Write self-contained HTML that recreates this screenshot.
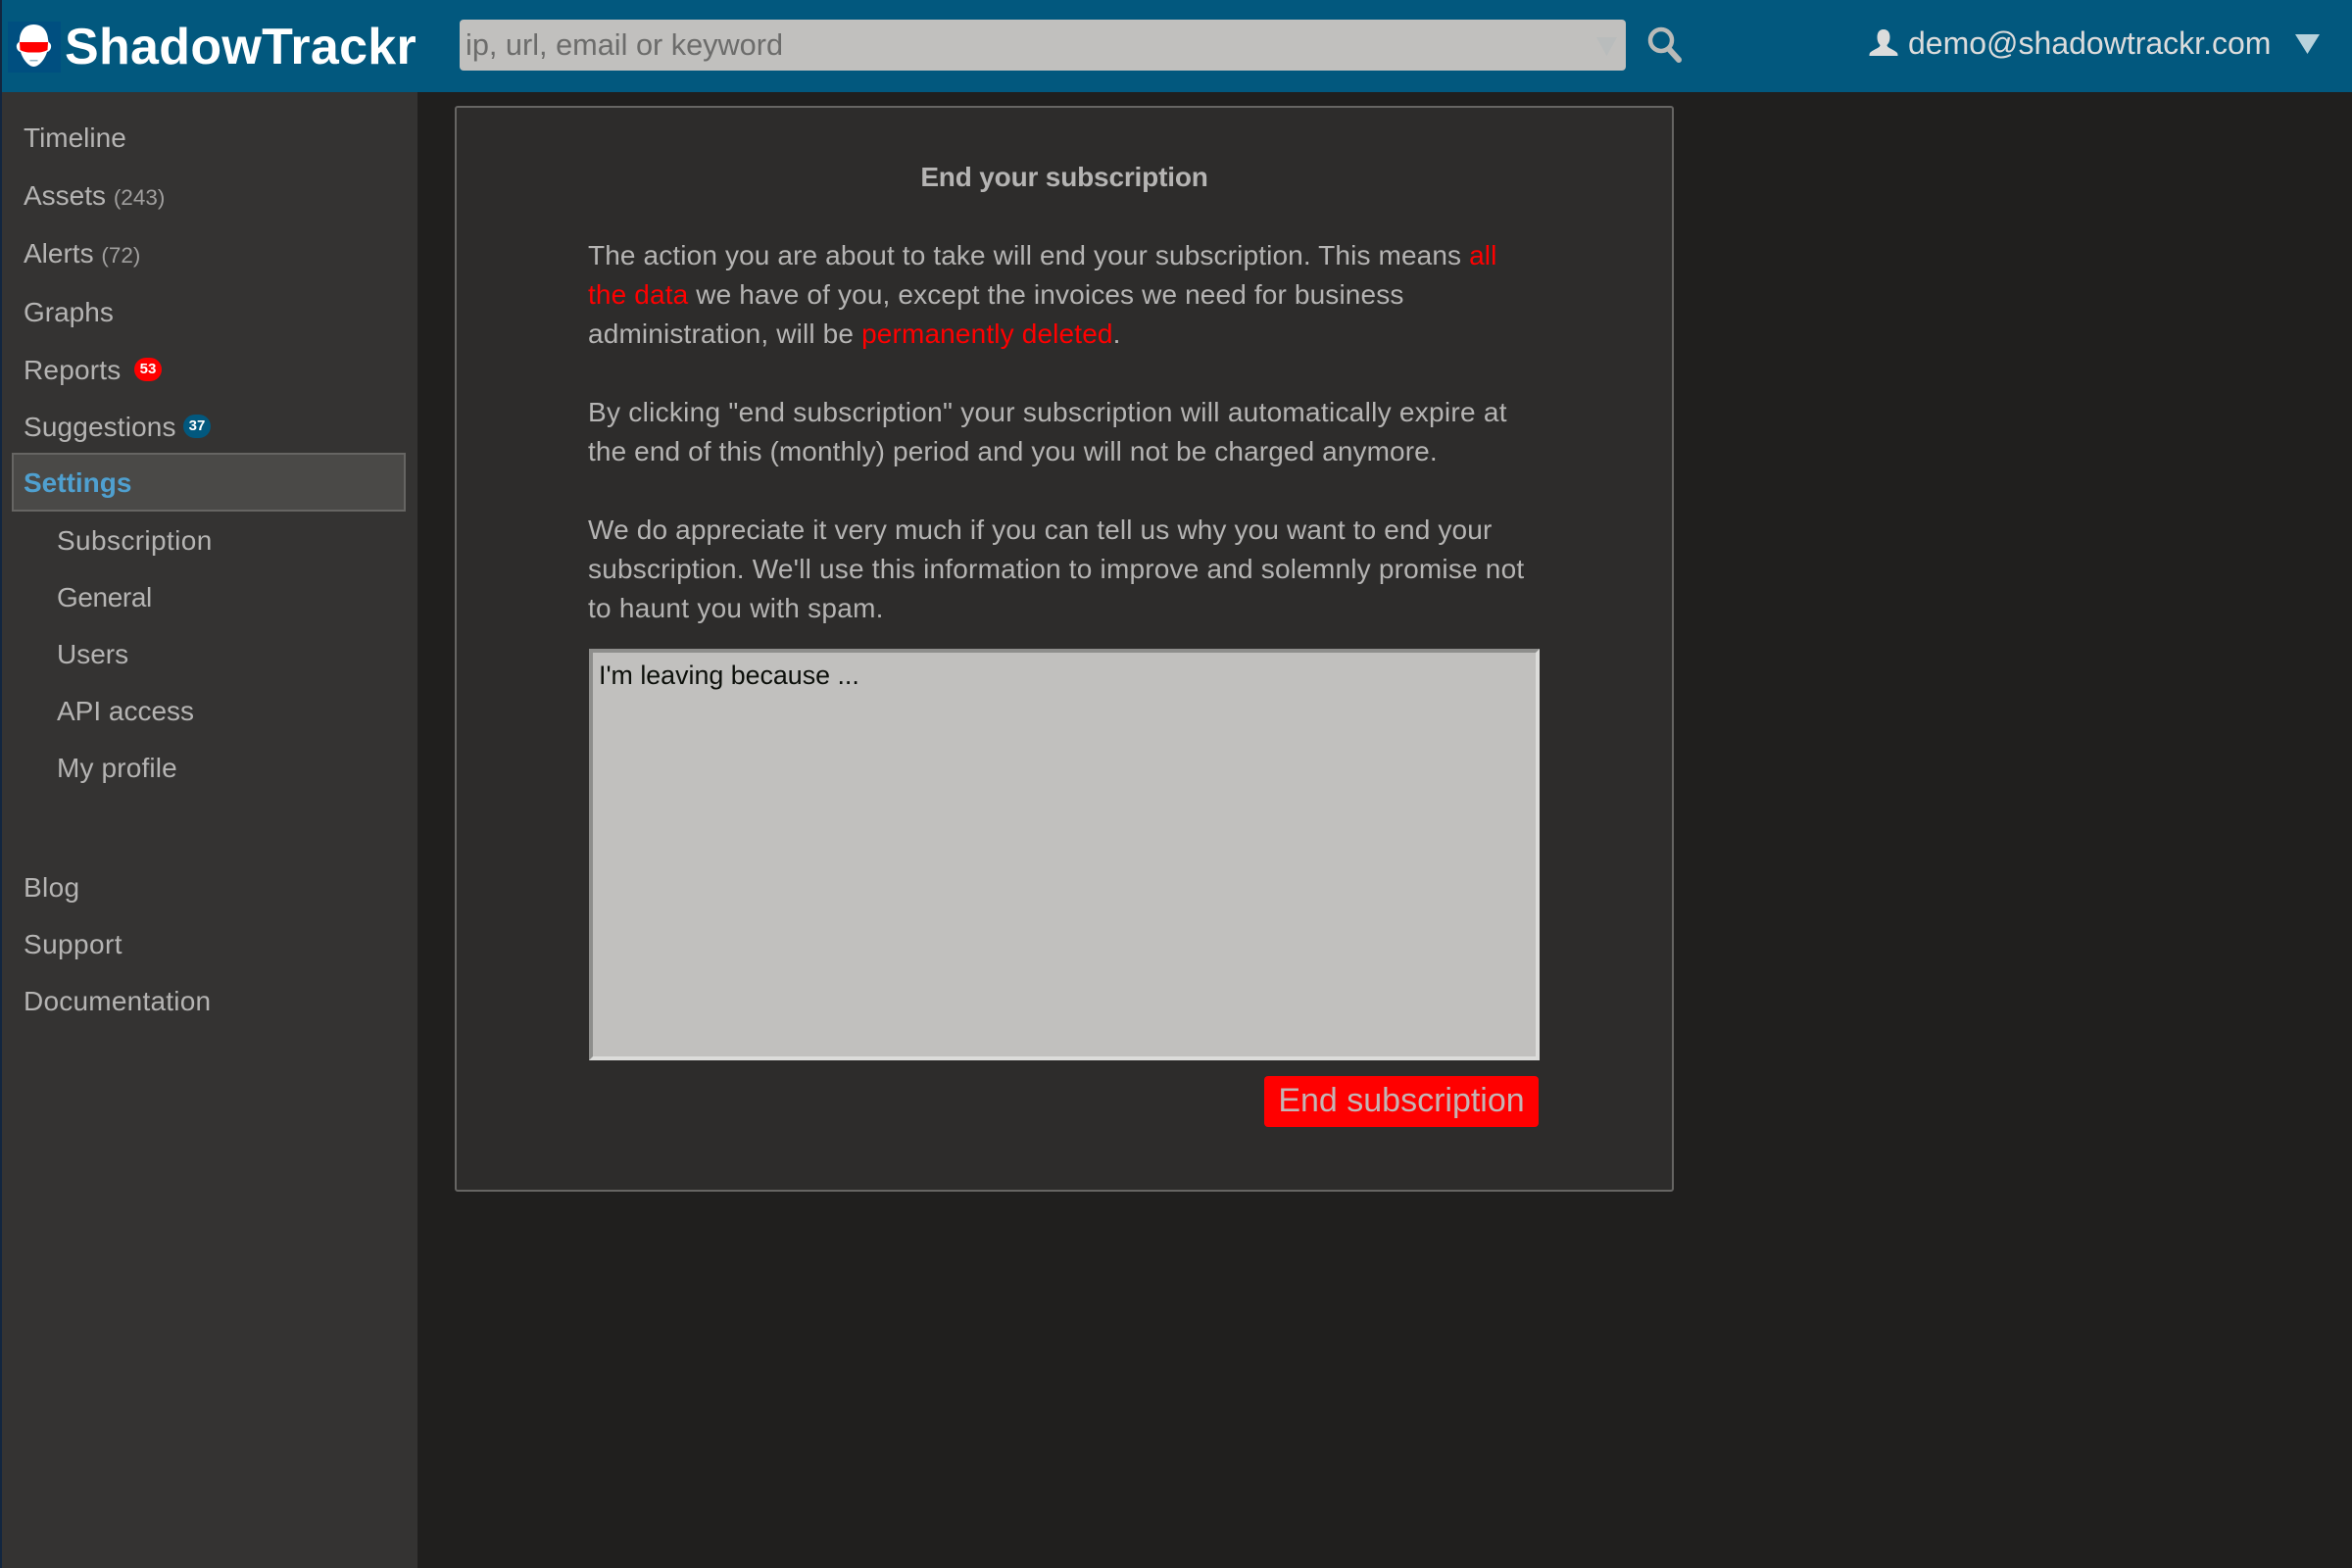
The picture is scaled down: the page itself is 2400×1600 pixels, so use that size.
<!DOCTYPE html>
<html lang="en">
<head>
<meta charset="utf-8">
<title>ShadowTrackr</title>
<style>
html,body{margin:0;padding:0;width:2400px;height:1600px;overflow:hidden;background:#201f1e;font-family:"Liberation Sans",Arial,sans-serif;color:#b5b4b3}
*{box-sizing:border-box}
.a{position:absolute;white-space:nowrap}
#edge{left:0;top:0;width:2px;height:1600px;background:#12263f}
#header{left:2px;top:0;width:2398px;height:94px;background:#02587e}
#side{left:2px;top:94px;width:424px;height:1506px;background:#343332}
.n{font-size:28px;line-height:40px;left:24px;color:#b5b4b3}
.s{left:58px}
.n small{font-size:22.5px;color:#a09f9e}
.badge{height:24px;width:28px;border-radius:12px;color:#fff;font-size:15px;font-weight:bold;line-height:24px;text-align:center}
#active{left:12px;top:462px;width:402px;height:60px;background:#4a4947;border:2px solid #666563}
#panel{left:464px;top:108px;width:1244px;height:1108px;background:#2d2c2b;border:2px solid #666563;border-radius:3px}
.p{left:600px;font-size:28px;line-height:40px;color:#b5b4b3}
.r{color:#ff0000}
#ta{left:601px;top:662px;width:970px;height:420px;background:#c1c0be;border:4px solid;border-color:#8e8e8c #dcdcda #dcdcda #8e8e8c;color:#0c0f0a;font-size:26.8px;line-height:32px;padding:7px 6px}
#btn{left:1290px;top:1098px;width:280px;height:52px;background:#ff0000;border-radius:4px;color:#c4b4b4;font-size:34px;line-height:51px;text-align:center}
</style>
</head>
<body>
<div class="a" id="edge"></div>
<div class="a" id="header"></div>
<div class="a" id="side"></div>

<svg class="a" style="left:8px;top:22px" width="54" height="52" viewBox="0 0 54 52">
<rect width="54" height="52" fill="#004f80"/>
<path d="M26.500 3C17 3 12.500 10 12 18L11.500 21C9.500 22 8.500 24 9 26.500C9.500 29 11 30.500 13 31C15 38 21 46 26.500 46C32 46 38 38 40 31C42 30.500 43.500 29 44 26.500C44.500 24 43.500 22 41.500 21L41 18C40.500 10 36 3 26.500 3Z" fill="#fff"/>
<path d="M12 21L41 21L40.500 29C35 32 30 31.500 26.500 31.500C23 31.500 18 32 12.500 29Z" fill="#ff0000"/>
<rect x="22.500" y="39" width="8" height="1.500" fill="#8fb3c4"/>
</svg>
<div class="a" style="left:66px;top:18px;font-size:52px;line-height:60px;font-weight:bold;color:#fff;letter-spacing:.3px">ShadowTrackr</div>

<div class="a" style="left:469px;top:20px;width:1190px;height:52px;background:#c1c0be;border-radius:4px"></div>
<div class="a" style="left:475px;top:26px;font-size:30.700px;line-height:40px;color:#6c6c6b">ip, url, email or keyword</div>
<svg class="a" style="left:1629px;top:38px" width="22" height="20" viewBox="0 0 22 20"><path d="M0 0H21L10.500 19Z" fill="#b9bcbc"/></svg>
<svg class="a" style="left:1680px;top:26px" width="38" height="40" viewBox="0 0 38 40">
<circle cx="15" cy="15" r="11" fill="none" stroke="#b9bab8" stroke-width="4.500"/>
<path d="M23 24L33 35" stroke="#b9bab8" stroke-width="6" stroke-linecap="round"/>
</svg>

<svg class="a" style="left:1907px;top:30px" width="30" height="27" viewBox="0 0 30 27">
<path d="M15 0C10 0 8.500 4 8.500 8C8.500 12 10 14.500 11.500 16C11.500 19 5 20 1 24C0.500 25 .5 26 .5 27H29.500C29.500 26 29.500 25 29 24C25 20 18.500 19 18.500 16C20 14.500 21.500 12 21.500 8C21.500 4 20 0 15 0Z" fill="#dcdcdc"/>
</svg>
<div class="a" style="left:1947px;top:24px;font-size:32px;line-height:40px;color:#dcdcdc">demo@shadowtrackr.com</div>
<svg class="a" style="left:2342px;top:35px" width="26" height="21" viewBox="0 0 26 21"><path d="M0 0H25L12.500 20Z" fill="#b8d2dc"/></svg>

<div class="a n" style="top:121px">Timeline</div>
<div class="a n" style="top:180px">Assets <small>(243)</small></div>
<div class="a n" style="top:239px">Alerts <small>(72)</small></div>
<div class="a n" style="top:299px">Graphs</div>
<div class="a n" style="top:358px;letter-spacing:.2px">Reports</div>
<div class="a badge" style="left:137px;top:365px;background:#ff0000">53</div>
<div class="a n" style="top:416px;letter-spacing:.14px">Suggestions</div>
<div class="a badge" style="left:187px;top:423px;background:#02587e">37</div>
<div class="a" id="active"></div>
<div class="a n" style="top:473px;color:#4fa0d0;font-weight:bold">Settings</div>
<div class="a n s" style="top:532px;letter-spacing:.38px">Subscription</div>
<div class="a n s" style="top:590px;letter-spacing:-.4px">General</div>
<div class="a n s" style="top:648px">Users</div>
<div class="a n s" style="top:706px">API access</div>
<div class="a n s" style="top:764px;letter-spacing:.15px">My profile</div>
<div class="a n" style="top:886px;letter-spacing:.35px">Blog</div>
<div class="a n" style="top:944px;letter-spacing:.4px">Support</div>
<div class="a n" style="top:1002px;letter-spacing:.23px">Documentation</div>

<div class="a" id="panel"></div>
<div class="a" style="left:465px;width:1242px;top:161px;text-align:center;font-size:28px;line-height:40px;font-weight:bold;color:#b5b4b3;letter-spacing:-.18px">End your subscription</div>

<div class="a p" style="top:241px;letter-spacing:.13px">The action you are about to take will end your subscription. This means <span class="r">all</span></div>
<div class="a p" style="top:281px;letter-spacing:.14px"><span class="r">the data</span> we have of you, except the invoices we need for business</div>
<div class="a p" style="top:321px;letter-spacing:.15px">administration, will be <span class="r">permanently deleted</span>.</div>
<div class="a p" style="top:401px;letter-spacing:.28px">By clicking "end subscription" your subscription will automatically expire at</div>
<div class="a p" style="top:441px;letter-spacing:.11px">the end of this (monthly) period and you will not be charged anymore.</div>
<div class="a p" style="top:521px;letter-spacing:.15px">We do appreciate it very much if you can tell us why you want to end your</div>
<div class="a p" style="top:561px;letter-spacing:.2px">subscription. We'll use this information to improve and solemnly promise not</div>
<div class="a p" style="top:601px;letter-spacing:.26px">to haunt you with spam.</div>

<div class="a" id="ta">I'm leaving because ...</div>
<div class="a" id="btn">End subscription</div>
</body>
</html>
